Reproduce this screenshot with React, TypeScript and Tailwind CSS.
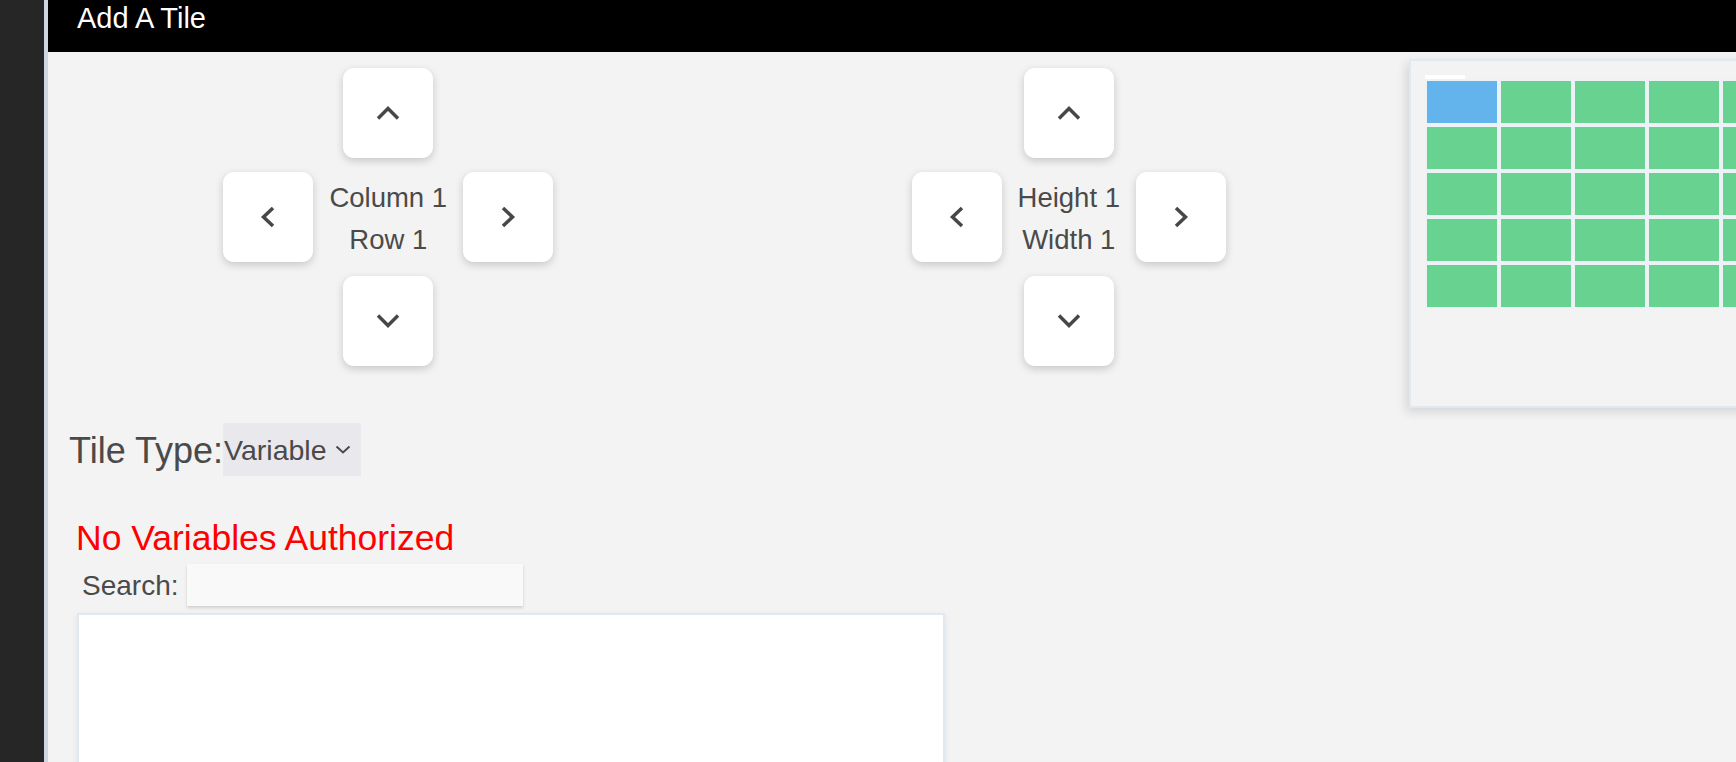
import React, { useState } from 'react';

type Dir = 'up' | 'down' | 'left' | 'right';

// small chevrons drawn by hand, the pad buttons use them
const Chevron = ({ dir }: { dir: Dir }) => {
    if (dir === 'up' || dir === 'down') {
        const pts = dir === 'up' ? "2,12.5 12,2.5 22,12.5" : "2,1.5 12,11.5 22,1.5";
        return (
            <svg width="24" height="14" viewBox="0 0 24 14" fill="none" stroke="#474747" strokeWidth="3.5">
                <polyline points={pts} />
            </svg>
        );
    }
    const pts = dir === 'left' ? "13,2 3.5,11 13,20" : "3,2 12.5,11 3,20";
    return (
        <svg width="16" height="22" viewBox="0 0 16 22" fill="none" stroke="#474747" strokeWidth="3.5">
            <polyline points={pts} />
        </svg>
    );
};

const PadButton = ({ dir, onClick }: { dir: Dir; onClick?: () => void }) => (
    <button
        onClick={onClick}
        className="w-[90px] h-[90px] shrink-0 rounded-[11px] bg-white shadow-[0_3px_8px_rgba(0,0,0,0.18)] flex items-center justify-center"
    >
        <Chevron dir={dir} />
    </button>
);

const DPad = ({ top, bottom }: { top: string; bottom: string }) => (
    <div className="w-[680.5px] shrink-0 flex flex-col items-center pt-[16px] gap-[14px]">
        <PadButton dir="up" />
        <div className="flex items-center">
            <PadButton dir="left" />
            <div className="px-4 pt-[4px] text-[27.5px] leading-[42px] text-center text-[#4a4a4a] whitespace-nowrap">
                <div>{top}</div>
                <div>{bottom}</div>
            </div>
            <PadButton dir="right" />
        </div>
        <PadButton dir="down" />
    </div>
);

const ROWS = 5;
const COLS = 9;

export default function App() {
    const [tileType] = useState('Variable');

    return (
        <div
            className="w-[1736px] h-[762px] overflow-hidden flex bg-[#262626]"
            style={{ fontFamily: '"Liberation Sans", Arial, sans-serif' }}
        >
            {/* window behind */}
            <div className="w-[44px] shrink-0 bg-[#262626]" />

            <div className="flex-1 min-w-0 border-l-4 border-[#cdd7e2] bg-[#f3f3f3] flex flex-col overflow-hidden">
                <div className="h-[52px] shrink-0 bg-black text-white text-[29px] leading-[32px] pl-[29px] pt-[2px]">
                    Add A Tile
                </div>

                {/* position / size pads + preview */}
                <div className="flex shrink-0">
                    <DPad top="Column 1" bottom="Row 1" />
                    <DPad top="Height 1" bottom="Width 1" />
                    <div className="shrink-0 w-[680px] h-[349px] mt-[7px] border-2 border-[#e2e8f0] bg-[#f3f3f3] shadow-[-3px_4px_10px_rgba(0,0,0,0.12)] p-[14px]">
                        <div className="w-[40px] h-[4px] bg-white" />
                        <div className="inline-grid grid-cols-[repeat(9,70px)] gap-[4px] p-[2px] bg-[#edf2f7]">
                            {Array.from({ length: ROWS * COLS }, (_, i) => (
                                <div key={i} className={`h-[42px] ${i === 0 ? 'bg-[#63b3ed]' : 'bg-[#68d391]'}`} />
                            ))}
                        </div>
                    </div>
                </div>

                <div className="flex items-center mt-[15px] pl-[21px] text-[#4a4a4a]">
                    <span className="text-[36px] leading-[1.15] pt-[3px]">Tile Type:</span>
                    <div className="h-[53px] w-[138px] bg-[#e8e8ed] flex items-center pl-[1px] pr-[10px] justify-between">
                        <span className="text-[28.5px] leading-[1.15] pt-[1px]">{tileType}</span>
                        <svg width="16" height="9" viewBox="0 0 16 9" fill="none" stroke="#4a4a4a" strokeWidth="2">
                            <polyline points="1.5,1.5 8,7.5 14.5,1.5" />
                        </svg>
                    </div>
                </div>

                <div className="mt-[42px] pl-[28px] text-[35.5px] leading-[1.15] text-[#ff0000]">No Variables Authorized</div>

                <div className="flex items-center mt-[5px] pl-[34px] text-[#4a4a4a]">
                    <span className="text-[28px] leading-[1.15] pt-[2px]">Search:</span>
                    <input className="ml-[8px] w-[336px] h-[42px] bg-[#f9f9f9] shadow-[0_2px_3px_rgba(0,0,0,0.15)] outline-none px-2 text-[22px]" />
                </div>

                <div className="ml-[29px] mt-[7px] w-[868px] h-[200px] shrink-0 bg-white border-2 border-[#e2e8f0] shadow-[0_2px_6px_rgba(0,0,0,0.08)]" />
            </div>
        </div>
    );
}
